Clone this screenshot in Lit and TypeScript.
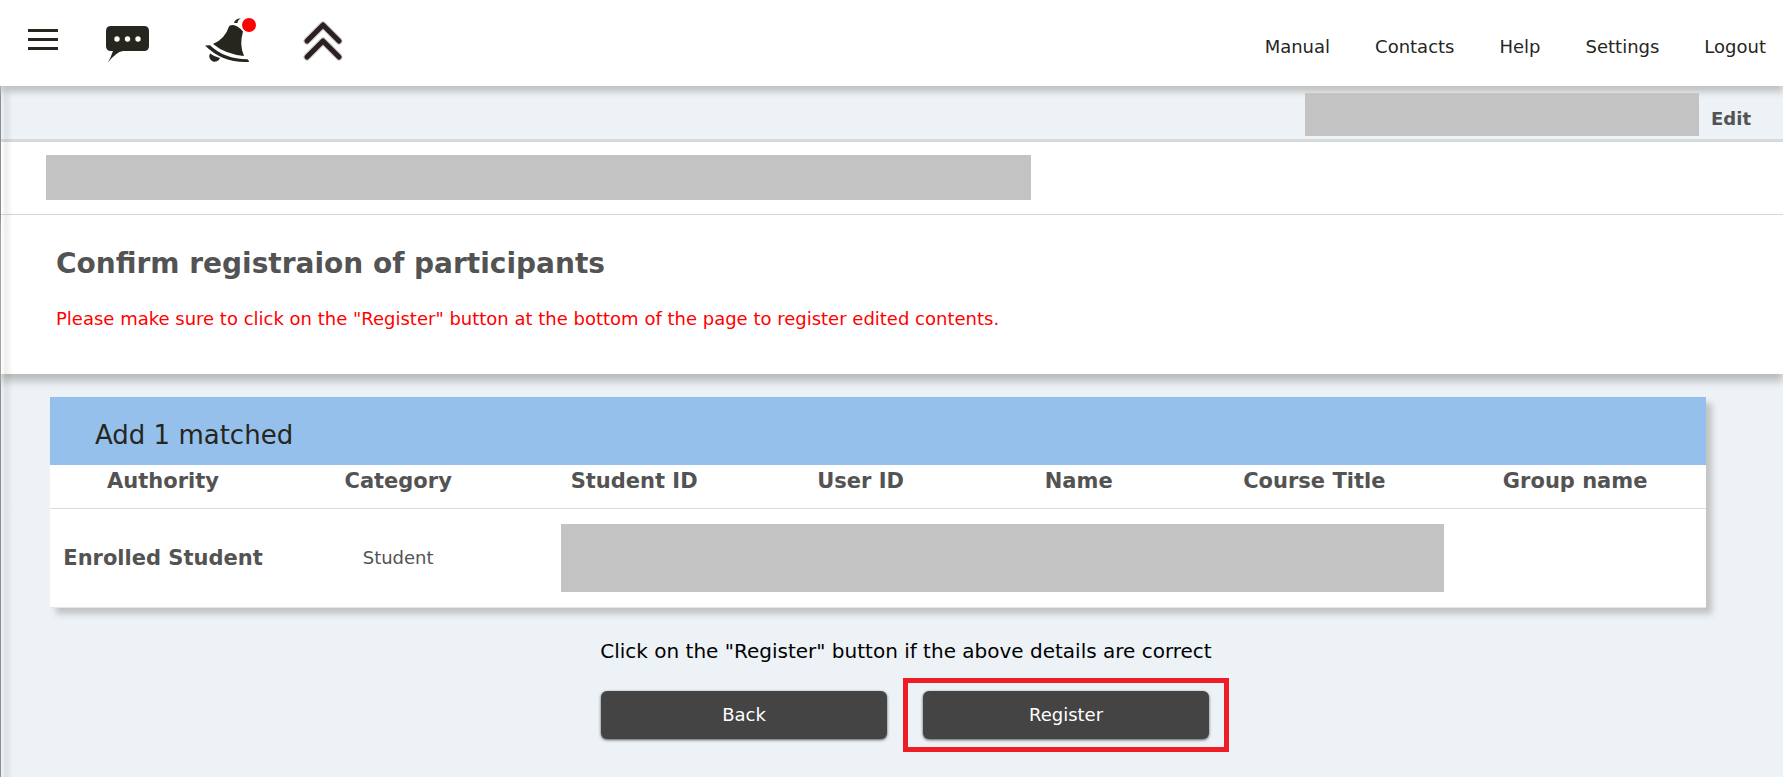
import { LitElement, html, css } from "lit";
import { customElement } from "lit/decorators.js";

const LINKS = ["Manual", "Contacts", "Help", "Settings", "Logout"];
const COLUMNS = ["Authority", "Category", "Student ID", "User ID", "Name", "Course Title", "Group name"];

@customElement("app-header")
export class AppHeader extends LitElement {
  static styles = css`
    :host {
      display: flex;
      align-items: center;
      justify-content: space-between;
      height: 86px;
      background: #fff;
      position: relative;
      z-index: 2;
      box-shadow: 0 6px 6px #c3c3c3;
    }
    .tools { display: flex; align-items: center; padding-left: 20px; padding-bottom: 4px; }
    .tool {
      display: flex;
      align-items: center;
      padding: 0;
      border: 0;
      background: none;
      cursor: pointer;
    }
    .tool svg { display: block; }
    .menu { width: 46px; padding-bottom: 4px; justify-content: center; }
    .chat { margin-left: 40px; }
    .bell { margin-left: 55px; }
    .top { margin-left: 42px; }
    .links { display: flex; gap: 45px; padding: 8px 17px 0 0; }
    .link { color: #26261f; font-size: 18px; line-height: 24px; text-decoration: none; }
  `;
  render() {
    return html`
      <div class="tools">
        <button class="tool menu" aria-label="Menu">
          <svg width="30" height="22" viewBox="0 0 30 22"><path d="M0 2.500h30M0 11.500h30M0 20.500h30" stroke="#26261f" stroke-width="3" /></svg>
        </button>
        <button class="tool chat" aria-label="Messages">
          <svg width="44" height="46" viewBox="0 0 44 46" fill="#26261f">
            <path d="M5 8h33q5 0 5 5v15q0 5-5 5H17Q10 34 2 44.500Q5 39 7 33H5q-5 0-5-5V13q0-5 5-5z" />
            <g fill="#fff"><circle cx="11" cy="21" r="2.700" /><circle cx="21.500" cy="21" r="2.700" /><circle cx="32" cy="21" r="2.700" /></g>
          </svg>
        </button>
        <button class="tool bell" aria-label="Notifications">
          <svg width="52" height="46" viewBox="0 0 52 46" fill="#26261f">
            <path d="M25 7.500Q31 5 38 13.500Q34 27 39 38Q20 36 8 26Q20 21 24 8.500Q24.300 7.800 25 7.500z" />
            <path d="M0 27.500L5 27.300Q19 41 42.500 41.300Q44 42.500 44 44Q18 45.500 0 27.500z" />
            <path d="M5 35.500Q9 38.500 15 40A5.500 5.500 0 1 1 5 35.500z" />
            <path d="M29 5Q30.500 0 36 .500Q32.500 2 32.500 5z" />
            <circle cx="44" cy="7" r="7" fill="#f00" />
          </svg>
        </button>
        <button class="tool top" aria-label="Back to top">
          <svg width="48" height="44" viewBox="0 0 48 44" fill="none" stroke="#2b2020" stroke-width="5" stroke-linecap="round" stroke-linejoin="round">
            <path d="M8 22L24 6L40 22M8 38L24 22L40 38" stroke="#2b202044" stroke-width="7" />
            <path d="M8 22L24 6L40 22M8 38L24 22L40 38" />
          </svg>
        </button>
      </div>
      <nav class="links">${LINKS.map((l) => html`<a class="link" href="#">${l}</a>`)}</nav>
    `;
  }
}

@customElement("app-root")
export class AppRoot extends LitElement {
  static styles = css`
    :host {
      display: flex;
      flex-direction: column;
      min-height: 100vh;
      background: #edf2f6;
      color: #535353;
      font-family: Verdana, "DejaVu Sans", sans-serif;
    }
    .page { flex: 1; position: relative; border-left: 1px solid #938b89; }
    .edge {
      position: absolute;
      inset: 0 auto 0 0;
      width: 12px;
      background: linear-gradient(to right, #0000, #0001 40%, #0000);
      pointer-events: none;
    }
    .masked { background: #c3c3c3; }
    .account {
      display: flex;
      justify-content: flex-end;
      padding: 7px 32px 3px 0;
      gap: 12px;
      border-bottom: 3px solid #d6dada;
    }
    .account .masked { position: relative; z-index: 3; width: 394px; height: 43px; }
    .edit { color: #535353; font-size: 18px; font-weight: bold; line-height: 24px; text-decoration: none; padding-top: 14px; }
    .course { background: #fff; padding: 13px 38px 14px 45px; border-bottom: 1px solid #d6dada; }
    .course .masked { width: 58%; height: 45px; }
    .intro { background: #fff; padding: 29px 55px 41px; box-shadow: 0 7px 8px #b9b9b9; }
    .title { margin: 0 0 21px; font-size: 28px; line-height: 40px; }
    .note { margin: 0; color: #f00; font-size: 18px; line-height: 28px; }
    .card { margin: 23px 77px 0 49px; background: #fff; box-shadow: 6px 6px 6px #c3c3c3; }
    .caption { margin: 0; padding: 20px 45px 12px; background: #95c0eb; color: #26261f; font-size: 26px; font-weight: normal; line-height: 36px; }
    .grid { width: 100%; border-collapse: collapse; table-layout: fixed; }
    .head { height: 43px; padding: 2px 0 12px; border-bottom: 1px solid #dcdcdc; box-sizing: border-box; font-size: 21px; line-height: 28px; }
    .cell { height: 98px; padding: 0; border-bottom: 1px solid #e6e6e6; text-align: center; font-size: 18px; }
    .role { font-size: 21px; font-weight: bold; }
    .data { padding-left: 41px; }
    .data .masked { height: 68px; }
    .c1 { width: 13.65%; } .c2 { width: 14.75%; } .c3 { width: 13.75%; } .c4 { width: 13.6%; }
    .c5 { width: 12.75%; } .c6 { width: 15.7%; } .c7 { width: 15.8%; }
    .finish { display: flex; flex-direction: column; align-items: center; padding: 28px 0 26px 28px; }
    .ask { margin: 0 0 12px; color: #000; font-size: 20px; line-height: 30px; }
    .actions { display: flex; align-items: center; gap: 16px; padding-left: 18px; }
    .button {
      display: block;
      width: 286px;
      height: 48px;
      border: 0;
      border-radius: 6px;
      background: #434443;
      box-shadow: 0 1px 3px #555;
      color: #fff;
      font-family: inherit;
      font-size: 18px;
    }
    .frame { padding: 8px 15px; border: 5px solid #ee1c25; }
  `;
  render() {
    return html`
      <app-header></app-header>
      <main class="page">
        <div class="account"><div class="masked"></div><a class="edit" href="#">Edit</a></div>
        <div class="course"><div class="masked"></div></div>
        <section class="intro">
          <h1 class="title">Confirm registraion of participants</h1>
          <p class="note">Please make sure to click on the "Register" button at the bottom of the page to register edited contents.</p>
        </section>
        <section class="card">
          <h2 class="caption">Add 1 matched</h2>
          <table class="grid">
            <colgroup>${COLUMNS.map((_, i) => html`<col class="c${i + 1}" />`)}</colgroup>
            <thead><tr>${COLUMNS.map((c) => html`<th class="head" scope="col">${c}</th>`)}</tr></thead>
            <tbody>
              <tr>
                <th class="cell role" scope="row">Enrolled Student</th>
                <td class="cell">Student</td>
                <td class="cell data" colspan="4"><div class="masked"></div></td>
                <td class="cell"></td>
              </tr>
            </tbody>
          </table>
        </section>
        <section class="finish">
          <p class="ask">Click on the "Register" button if the above details are correct</p>
          <div class="actions">
            <button class="button">Back</button>
            <div class="frame"><button class="button">Register</button></div>
          </div>
        </section>
        <div class="edge"></div>
      </main>
    `;
  }
}
